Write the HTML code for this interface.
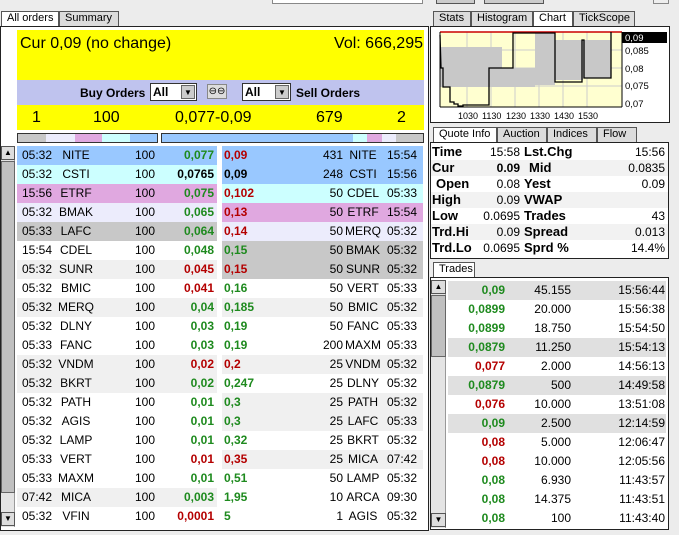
<!DOCTYPE html>
<html><head><meta charset="utf-8"><style>
*{margin:0;padding:0;box-sizing:border-box}
body{width:679px;height:535px;background:#ececec;font-family:"Liberation Sans",Arial,sans-serif;font-size:12px;color:#000;position:relative;overflow:hidden}
.a{position:absolute}
.tab{position:absolute;height:15px;border:1px solid #555;border-bottom:none;background:#dcdcdc;font-size:11px;line-height:13px;padding-left:5px;white-space:nowrap;overflow:hidden}
.sel{background:#fff}
.row{position:absolute;height:19px;line-height:19px;font-size:12px}
.row span{position:absolute;white-space:nowrap}
.g{color:#1e8a1e;font-weight:bold}
.r{color:#b40000;font-weight:bold}
.k{font-weight:bold}
.L .t{left:5px}.L .s{left:39px;width:40px;text-align:center}.L .q{right:62px}.L .p{right:3px}
.R .p{left:2px}.R .q{right:80px}.R .s{left:121px;width:40px;text-align:center}.R .t{right:6px}
.qi{position:absolute;left:431px;width:237px;height:16px;line-height:16px}
.qi span{position:absolute;white-space:nowrap}
.lb{font-weight:bold;font-size:13px}
.tr{position:absolute;left:448px;width:218px;height:19px;line-height:19px;z-index:2}
.tr span{position:absolute}
</style></head><body>
<div class="a" style="left:272px;top:-2px;width:151px;height:6px;background:#fff;border:1px solid #888"></div>
<div class="a" style="left:436px;top:-2px;width:39px;height:6px;background:#ccc;border:1px solid #555"></div>
<div class="a" style="left:484px;top:-2px;width:60px;height:6px;background:#ccc;border:1px solid #555"></div>
<div class="a" style="left:653px;top:-2px;width:16px;height:6px;background:#eee;border:1px solid #888"></div>

<div class="tab sel" style="left:1px;top:11px;width:58px">All orders</div>
<div class="tab" style="left:59px;top:11px;width:60px">Summary</div>
<div class="a" style="left:0;top:26px;width:429px;height:505px;border:1px solid #222;background:#fff"></div>
<div class="a" style="left:17px;top:30px;width:407px;height:50px;background:#ffff00"></div>
<div class="a" style="left:20px;top:35px;font-size:16px">Cur 0,09 (no change)</div>
<div class="a" style="right:256px;top:35px;font-size:16px">Vol: 666,295</div>
<div class="a" style="left:17px;top:80px;width:407px;height:25px;background:#bfc3ee"></div>
<div class="a k" style="left:80px;top:86px;font-size:12px">Buy Orders</div>
<div class="a" style="left:150px;top:83px;width:47px;height:18px;background:#fff;border:1px solid #333"><b style="position:absolute;left:2px;top:1px">All</b><div class="a" style="right:1px;top:1px;width:14px;height:14px;background:#ccc;border:1px solid #666;font-size:8px;text-align:center;line-height:13px">▼</div></div>
<div class="a" style="left:207px;top:84px;width:20px;height:15px;background:#ddd;border:1px solid #888;font-size:10px;text-align:center;line-height:13px">⊖⊖</div>
<div class="a" style="left:242px;top:83px;width:49px;height:18px;background:#fff;border:1px solid #333"><b style="position:absolute;left:2px;top:1px">All</b><div class="a" style="right:1px;top:1px;width:14px;height:14px;background:#ccc;border:1px solid #666;font-size:8px;text-align:center;line-height:13px">▼</div></div>
<div class="a k" style="left:296px;top:86px">Sell Orders</div>
<div class="a" style="left:17px;top:105px;width:407px;height:25px;background:#ffff00;font-size:16px;line-height:25px">
<span class="a" style="left:15px">1</span><span class="a" style="left:76px">100</span><span class="a" style="left:158px">0,077-0,09</span><span class="a" style="left:299px">679</span><span class="a" style="left:380px">2</span></div>
<div class="a" style="left:17px;top:133px;width:141px;height:10px;border:1px solid #333;display:flex">
<i style="flex:28;background:#c8c8c8"></i><i style="flex:29;background:#ececfc"></i><i style="flex:28;background:#e0a8e0"></i><i style="flex:28;background:#ccffff"></i><i style="flex:27;background:#99c8ff"></i></div>
<div class="a" style="left:161px;top:133px;width:263px;height:10px;border:1px solid #333;display:flex">
<i style="flex:192;background:#99c8ff"></i><i style="flex:14;background:#ccffff"></i><i style="flex:15;background:#e0a8e0"></i><i style="flex:14;background:#ececfc"></i><i style="flex:27;background:#c8c8c8"></i></div>
<div class="a" style="left:1px;top:146px;width:14px;height:381px;background:#e4e4e4;border-right:1px solid #999"></div>
<div class="a" style="left:1px;top:146px;width:14px;height:14px;background:#ddd;border:1px solid #555;font-size:8px;text-align:center;line-height:12px">▲</div>
<div class="a" style="left:1px;top:161px;width:14px;height:332px;background:#c0c0c0;border:1px solid #666"></div>
<div class="a" style="left:1px;top:512px;width:14px;height:14px;background:#ddd;border:1px solid #555;font-size:8px;text-align:center;line-height:12px">▼</div>

<div id="L"></div>

<div class="tab" style="left:433px;top:11px;width:38px">Stats</div>
<div class="tab" style="left:471px;top:11px;width:62px">Histogram</div>
<div class="tab sel" style="left:533px;top:11px;width:40px">Chart</div>
<div class="tab" style="left:573px;top:11px;width:62px">TickScope</div>
<div class="a" style="left:430px;top:26px;width:240px;height:97px;border:1px solid #222;background:#fff"></div>
<svg class="a" style="left:430px;top:27px" width="240" height="95" viewBox="430 27 240 95">
<rect x="440" y="32" width="182" height="75" fill="#ffffd0"/>
<g stroke="#ccc" stroke-width="1">
<line x1="467" y1="32" x2="467" y2="107"/><line x1="491" y1="32" x2="491" y2="107"/><line x1="515" y1="32" x2="515" y2="107"/><line x1="539" y1="32" x2="539" y2="107"/><line x1="563" y1="32" x2="563" y2="107"/><line x1="587" y1="32" x2="587" y2="107"/>
<line x1="440" y1="50" x2="622" y2="50"/><line x1="440" y1="68" x2="622" y2="68"/><line x1="440" y1="86" x2="622" y2="86"/>
</g>
<g fill="#c8c8c8">
<rect x="440" y="47" width="62" height="40"/><rect x="502" y="68" width="33" height="19"/><rect x="535" y="33" width="20" height="52"/><rect x="555" y="40" width="28" height="40"/><rect x="583" y="40" width="28" height="38"/>
</g>
<line x1="440" y1="32" x2="622" y2="32" stroke="#c00" stroke-width="1.5"/>
<polyline fill="none" stroke="#000" stroke-width="1.3" points="440,35 441,68 443,68 443,87 450,87 450,102 454,102 454,104 458,104 458,106 463,106 463,105 489,105 489,68 513,68 513,33 555,33 555,82 582,82 582,40 584,40 584,78 611,78 611,32"/>
<line x1="440" y1="107" x2="622" y2="107" stroke="#000"/><line x1="440" y1="32" x2="440" y2="107" stroke="#000"/><line x1="622" y1="32" x2="622" y2="107" stroke="#000"/>
<rect x="622" y="32" width="45" height="11" fill="#000"/>
<g font-family="Liberation Sans" font-size="9.5">
<text x="625" y="41" fill="#fff">0,09</text><text x="625" y="54">0,085</text><text x="625" y="72">0,08</text><text x="625" y="89">0,075</text><text x="625" y="107">0,07</text>
</g>
<g font-family="Liberation Sans" font-size="9">
<text x="458" y="119">1030</text><text x="482" y="119">1130</text><text x="506" y="119">1230</text><text x="530" y="119">1330</text><text x="554" y="119">1430</text><text x="578" y="119">1530</text>
</g></svg>

<div class="tab sel" style="left:433px;top:127px;width:64px">Quote Info</div>
<div class="tab" style="left:497px;top:127px;width:50px">Auction</div>
<div class="tab" style="left:547px;top:127px;width:50px">Indices</div>
<div class="tab" style="left:597px;top:127px;width:40px">Flow</div>
<div class="a" style="left:430px;top:142px;width:239px;height:117px;border:1px solid #222;background:#fff"></div>
<div class="qi" style="top:144px"><span class="lb" style="left:1px">Time</span><span style="right:148px">15:58</span><span class="lb" style="left:93px">Lst.Chg</span><span style="right:3px">15:56</span></div>
<div class="qi" style="top:160px;background:#f2f2f2"><span class="lb" style="left:1px">Cur</span><span class="lb" style="right:148px;font-size:12px">0.09</span><span class="lb" style="left:98px">Mid</span><span style="right:3px">0.0835</span></div>
<div class="qi" style="top:176px"><span class="lb" style="left:5px">Open</span><span style="right:148px">0.08</span><span class="lb" style="left:93px">Yest</span><span style="right:3px">0.09</span></div>
<div class="qi" style="top:192px;background:#f2f2f2"><span class="lb" style="left:1px">High</span><span style="right:148px">0.09</span><span class="lb" style="left:93px">VWAP</span></div>
<div class="qi" style="top:208px"><span class="lb" style="left:1px">Low</span><span style="right:148px">0.0695</span><span class="lb" style="left:93px">Trades</span><span style="right:3px">43</span></div>
<div class="qi" style="top:224px;background:#f2f2f2"><span class="lb" style="left:1px">Trd.Hi</span><span style="right:148px">0.09</span><span class="lb" style="left:93px">Spread</span><span style="right:3px">0.013</span></div>
<div class="qi" style="top:240px"><span class="lb" style="left:1px">Trd.Lo</span><span style="right:148px">0.0695</span><span class="lb" style="left:93px">Sprd %</span><span style="right:3px">14.4%</span></div>

<div class="tab sel" style="left:433px;top:262px;width:42px">Trades</div>
<div class="a" style="left:430px;top:277px;width:239px;height:253px;border:1px solid #222;background:#fff"></div>
<div class="a" style="left:431px;top:280px;width:15px;height:248px;background:#e4e4e4;border-right:1px solid #999"></div>
<div class="a" style="left:431px;top:280px;width:15px;height:14px;background:#ddd;border:1px solid #555;font-size:8px;text-align:center;line-height:12px">▲</div>
<div class="a" style="left:431px;top:295px;width:15px;height:62px;background:#c0c0c0;border:1px solid #666"></div>
<div class="a" style="left:431px;top:513px;width:15px;height:14px;background:#ddd;border:1px solid #555;font-size:8px;text-align:center;line-height:12px">▼</div>
<div id="T"></div>
<script>
var L=[["05:32","NITE","0,077","g","#99c8ff"],["05:32","CSTI","0,0765","k","#ccffff"],["15:56","ETRF","0,075","g","#e0a8e0"],["05:32","BMAK","0,065","g","#ececfc"],["05:33","LAFC","0,064","g","#c8c8c8"],["15:54","CDEL","0,048","g","#fff"],["05:32","SUNR","0,045","r","#f0f0f0"],["05:32","BMIC","0,041","r","#fff"],["05:32","MERQ","0,04","g","#f0f0f0"],["05:32","DLNY","0,03","g","#fff"],["05:33","FANC","0,03","g","#fff"],["05:32","VNDM","0,02","r","#f0f0f0"],["05:32","BKRT","0,02","g","#f0f0f0"],["05:32","PATH","0,01","g","#fff"],["05:32","AGIS","0,01","g","#fff"],["05:32","LAMP","0,01","g","#fff"],["05:33","VERT","0,01","r","#fff"],["05:33","MAXM","0,01","g","#fff"],["07:42","MICA","0,003","g","#f0f0f0"],["05:32","VFIN","0,0001","r","#fff"]];
var R=[["0,09","r","431","NITE","15:54","#99c8ff"],["0,09","k","248","CSTI","15:56","#99c8ff"],["0,102","r","50","CDEL","05:33","#ccffff"],["0,13","r","50","ETRF","15:54","#e0a8e0"],["0,14","r","50","MERQ","05:32","#ececfc"],["0,15","g","50","BMAK","05:32","#c8c8c8"],["0,15","r","50","SUNR","05:32","#c8c8c8"],["0,16","g","50","VERT","05:33","#fff"],["0,185","g","50","BMIC","05:32","#f0f0f0"],["0,19","g","50","FANC","05:33","#fff"],["0,19","g","200","MAXM","05:33","#fff"],["0,2","r","25","VNDM","05:32","#f0f0f0"],["0,247","g","25","DLNY","05:32","#fff"],["0,3","g","25","PATH","05:32","#f0f0f0"],["0,3","g","25","LAFC","05:33","#f0f0f0"],["0,32","g","25","BKRT","05:32","#fff"],["0,35","r","25","MICA","07:42","#f0f0f0"],["0,51","g","50","LAMP","05:32","#fff"],["1,95","g","10","ARCA","09:30","#fff"],["5","g","1","AGIS","05:32","#fff"]];
var h="",t="";
L.forEach(function(d,i){h+='<div class="row L" style="left:17px;top:'+(146+i*19)+'px;width:200px;background:'+d[4]+'"><span class="t">'+d[0]+'</span><span class="s">'+d[1]+'</span><span class="q">100</span><span class="p '+d[3]+'">'+d[2]+'</span></div>';});
R.forEach(function(d,i){h+='<div class="row R" style="left:222px;top:'+(146+i*19)+'px;width:201px;background:'+d[5]+'"><span class="p '+d[1]+'">'+d[0]+'</span><span class="q">'+d[2]+'</span><span class="s">'+d[3]+'</span><span class="t">'+d[4]+'</span></div>';});
var T=[["0,09","g","45.155","15:56:44",1],["0,0899","g","20.000","15:56:38",0],["0,0899","g","18.750","15:54:50",0],["0,0879","g","11.250","15:54:13",1],["0,077","r","2.000","14:56:13",0],["0,0879","g","500","14:49:58",1],["0,076","r","10.000","13:51:08",0],["0,09","g","2.500","12:14:59",1],["0,08","r","5.000","12:06:47",0],["0,08","r","10.000","12:05:56",0],["0,08","g","6.930","11:43:57",0],["0,08","g","14.375","11:43:51",0],["0,08","g","100","11:43:40",0]];
T.forEach(function(d,i){t+='<div class="tr" style="top:'+(281+i*19)+'px;background:'+(d[4]?'#e0e0e0':'#fff')+'"><span class="'+d[1]+'" style="right:161px">'+d[0]+'</span><span style="right:95px">'+d[2]+'</span><span style="right:1px">'+d[3]+'</span></div>';});
document.getElementById("L").innerHTML=h;
document.getElementById("T").innerHTML=t;
</script>
</body></html>
